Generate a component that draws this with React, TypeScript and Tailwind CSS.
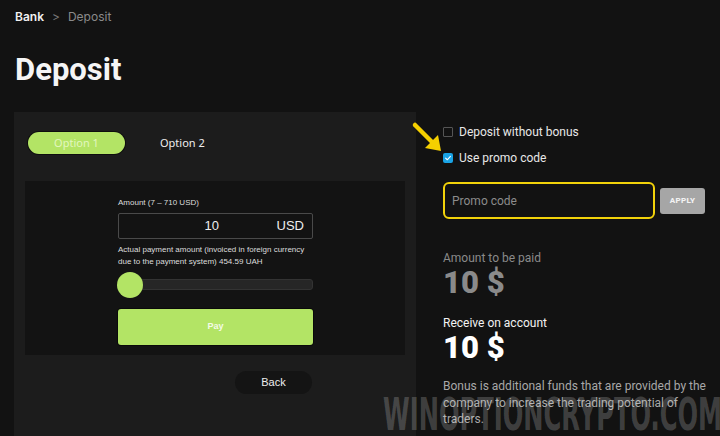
import React from 'react';

const green = 'bg-[#b3e465]';

function Checkbox({ checked, label }: { checked?: boolean; label: string }) {
  return (
    <label className="flex items-center gap-[6px] h-[14px]">
      {checked ? (
        <span className="w-[10px] h-[10px] rounded-[2px] bg-[#1aa4e6] flex items-center justify-center">
          <svg viewBox="0 0 10 10" className="w-[8px] h-[8px]">
            <path d="M2 5.2 L4.1 7.2 L8 3" fill="none" stroke="#fff" strokeWidth="1.4" strokeLinecap="round" strokeLinejoin="round" />
          </svg>
        </span>
      ) : (
        <span className="w-[10px] h-[10px] rounded-[1px] border border-[#555]" />
      )}
      <span className="text-[12px] text-[#e8e8e8]">{label}</span>
    </label>
  );
}

export default function App() {
  return (
    <div
      className="relative w-[720px] h-[436px] overflow-hidden bg-[#121212] text-white"
      style={{ fontFamily: 'Roboto, Inter, sans-serif' }}
    >
      {/* Breadcrumb + title */}
      <div className="pl-[15px] pt-[10px]">
        <div className="flex items-center gap-[8px] text-[12px] leading-[14px]" style={{ fontFamily: 'Inter, sans-serif' }}>
          <span className="font-semibold text-[#f0f0f0]">Bank</span>
          <span className="text-[#777]">&gt;</span>
          <span className="text-[#8a8a8a]">Deposit</span>
        </div>
        <h1 className="mt-[27px] text-[31px] leading-[38px] font-bold text-[#f5f5f5]" style={{ fontFamily: 'Roboto, sans-serif' }}>
          Deposit
        </h1>
      </div>

      <div className="flex mt-[23px]">
        {/* Left panel */}
        <div className="ml-[14px] w-[402px] h-[330px] bg-[#1c1c1c] pt-[20px]">
          <div className="flex items-center pl-[14px] h-[22px]" style={{ fontFamily: '"Noto Sans", sans-serif' }}>
            <button className={`w-[97px] h-[22px] rounded-full ${green} ring-1 ring-[#0e0e0e] text-[11px] text-[#e2f7bf]`}>
              Option 1
            </button>
            <span className="ml-[35px] text-[11px] text-[#eee]">Option 2</span>
          </div>

          <div className="ml-[11px] mt-[27px] w-[380px] h-[174px] bg-[#131313] pl-[93px] pt-[17px]" style={{ fontFamily: '"Liberation Sans", Arial, sans-serif' }}>
            <div className="w-[195px]">
              <div className="text-[8px] leading-[10px] text-[#ddd]">Amount (7 – 710 USD)</div>
              <div className="mt-[5px] h-[26px] border border-[#4a4a4a] rounded-[2px] flex items-center pr-[8px]">
                <span className="flex-1 text-center pl-[28px] text-[13px] text-[#eee]">10</span>
                <span className="text-[13px] text-[#eee]">USD</span>
              </div>
              <div className="mt-[5px] text-[8px] leading-[12px] text-[#ddd]">
                Actual payment amount (invoiced in foreign currency
                <br />
                due to the payment system) 454.59 UAH
              </div>
              <div className="relative mt-[11px] h-[11px] rounded-[3px] bg-[#262626] border border-[#333]">
                <span className={`absolute left-[-2px] top-[-8px] w-[26px] h-[26px] rounded-full ${green}`} />
              </div>
              <button className={`mt-[19px] w-full h-[36px] rounded-[3px] ${green} ring-1 ring-[#0a0a0a] text-[9px] font-bold text-[#f4fbe8]`}>
                Pay
              </button>
            </div>
          </div>

          <div className="flex justify-end pr-[104px] mt-[16px]">
            <button className="w-[77px] h-[23px] rounded-full bg-[#141414] text-[11px] text-[#eee]" style={{ fontFamily: '"Liberation Sans", Arial, sans-serif' }}>
              Back
            </button>
          </div>
        </div>

        {/* Right column */}
        <div className="ml-[27px] w-[270px] pt-[13px]">
          <div className="flex flex-col gap-[12px]">
            <Checkbox label="Deposit without bonus" />
            <Checkbox checked label="Use promo code" />
          </div>

          <div className="mt-[17px] flex items-center gap-[5px]">
            <div className="w-[212px] h-[37px] rounded-[6px] border-[2px] border-[#f2d20a] flex items-center pl-[7px] text-[12px] text-[#8c8c8c]">
              Promo code
            </div>
            <button className="w-[45px] h-[26px] rounded-[3px] bg-[#a6a6a6] text-[8px] font-extrabold tracking-[0.3px] text-[#f2f2f2]">
              APPLY
            </button>
          </div>

          <div className="mt-[31px] text-[12px] leading-[16px] text-[#8a8a8a]">Amount to be paid</div>
          <div className="text-[31px] leading-[34px] font-black text-[#8a8a8a]">10 $</div>
          <div className="mt-[15px] text-[12px] leading-[16px] text-[#f2f2f2]">Receive on account</div>
          <div className="text-[31px] leading-[34px] font-black text-white">10 $</div>

          <p className="mt-[13px] whitespace-nowrap text-[12px] leading-[16.5px] text-[#a8a8a8]">
            Bonus is additional funds that are provided by the
            <br />
            company to increase the trading potential of
            <br />
            traders.
          </p>
        </div>
      </div>

      {/* Annotation arrow */}
      <svg className="absolute left-[408px] top-[118px] w-[38px] h-[38px]" viewBox="0 0 38 38">
        <path d="M7 7 L26 26" stroke="#f5d000" strokeWidth="4.5" strokeLinecap="round" />
        <path d="M33 33 L17 30 L30 17 Z" fill="#f5d000" />
      </svg>

      {/* Watermark */}
      <div
        className="absolute left-[383px] top-[393px] text-[44px] leading-[44px] font-bold text-white/20 origin-left scale-x-[0.55] whitespace-nowrap select-none pointer-events-none"
        style={{ fontFamily: '"DejaVu Sans", sans-serif' }}
      >
        WINOPTIONCRYPTO.COM
      </div>
    </div>
  );
}
